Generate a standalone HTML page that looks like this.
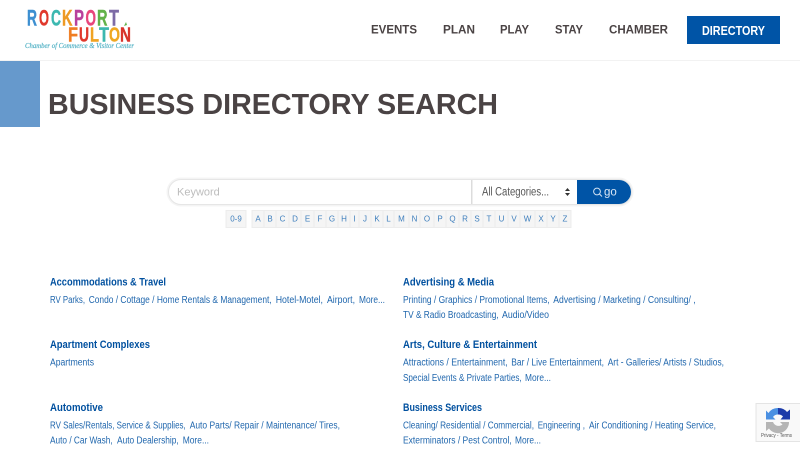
<!DOCTYPE html>
<html lang="en">
<head>
<meta charset="utf-8">
<title>Business Directory Search</title>
<style>
html,body{margin:0;padding:0;background:#fff;width:800px;height:450px;overflow:hidden}
svg{display:block;position:absolute;left:0;top:0}
text{font-family:"Liberation Sans",sans-serif}
.nav{font-size:11.5px;font-weight:700;fill:#4a4344}
.h{font-size:11px;font-weight:700;fill:#00509f}
.l{font-size:10px;fill:#1f66ad}
.a{font-size:8px;fill:#3f7fbd;text-anchor:middle}
.lg{font-family:"Liberation Sans",sans-serif;font-weight:700}
</style>
</head>
<body>
<svg width="800" height="450" viewBox="0 0 800 450" xmlns="http://www.w3.org/2000/svg">
<rect width="800" height="450" fill="#fff"/>
<!-- logo -->
<g class="lg" font-size="22" stroke-width=".4">
<text x="27" y="25.500" textLength="10" lengthAdjust="spacingAndGlyphs" fill="#3d8fd1" stroke="#3d8fd1">R</text>
<text x="39" y="25.500" textLength="10" lengthAdjust="spacingAndGlyphs" fill="#e0382c" stroke="#e0382c">O</text>
<text x="51" y="25.500" textLength="10" lengthAdjust="spacingAndGlyphs" fill="#3cb8b0" stroke="#3cb8b0">C</text>
<text x="62" y="25.500" textLength="10.500" lengthAdjust="spacingAndGlyphs" fill="#ee9a24" stroke="#ee9a24">K</text>
<text x="74" y="25.500" textLength="10" lengthAdjust="spacingAndGlyphs" fill="#b8409c" stroke="#b8409c">P</text>
<text x="85.500" y="25.500" textLength="10.500" lengthAdjust="spacingAndGlyphs" fill="#e8467c" stroke="#e8467c">O</text>
<text x="97" y="25.500" textLength="10.500" lengthAdjust="spacingAndGlyphs" fill="#62b24a" stroke="#62b24a">R</text>
<text x="109" y="25.500" textLength="10" lengthAdjust="spacingAndGlyphs" fill="#7d6ba6" stroke="#7d6ba6">T</text>
</g>
<g class="lg" font-size="20" stroke-width=".4">
<text x="68" y="41.500" textLength="10" lengthAdjust="spacingAndGlyphs" fill="#ef7d22" stroke="#ef7d22">F</text>
<text x="79" y="41.500" textLength="10" lengthAdjust="spacingAndGlyphs" fill="#e0382c" stroke="#e0382c">U</text>
<text x="90" y="41.500" textLength="9" lengthAdjust="spacingAndGlyphs" fill="#f0a322" stroke="#f0a322">L</text>
<text x="99" y="41.500" textLength="10" lengthAdjust="spacingAndGlyphs" fill="#3cb8b0" stroke="#3cb8b0">T</text>
<text x="109" y="41.500" textLength="11" lengthAdjust="spacingAndGlyphs" fill="#efa822" stroke="#efa822">O</text>
<text x="120" y="41.500" textLength="11" lengthAdjust="spacingAndGlyphs" fill="#d8322a" stroke="#d8322a">N</text>
</g>
<path d="M124 26l2-4 1 3z" fill="#62b24a"/>
<text x="25" y="48" textLength="109" lengthAdjust="spacingAndGlyphs" font-size="7" font-style="italic" fill="#4fb0c4" stroke="#4fb0c4" stroke-width=".15" style="font-family:'Liberation Serif',serif">Chamber of Commerce &amp; Visitor Center</text>

<!-- nav -->
<text class="nav" x="371" y="33.500" textLength="46" lengthAdjust="spacingAndGlyphs">EVENTS</text>
<text class="nav" x="443" y="33.500" textLength="32" lengthAdjust="spacingAndGlyphs">PLAN</text>
<text class="nav" x="500" y="33.500" textLength="29" lengthAdjust="spacingAndGlyphs">PLAY</text>
<text class="nav" x="555" y="33.500" textLength="28" lengthAdjust="spacingAndGlyphs">STAY</text>
<text class="nav" x="609" y="33.500" textLength="59" lengthAdjust="spacingAndGlyphs">CHAMBER</text>
<rect x="687" y="16" width="93" height="28" fill="#0054a6"/>
<text x="702" y="35" textLength="63" lengthAdjust="spacingAndGlyphs" font-size="13" font-weight="700" fill="#fff">DIRECTORY</text>
<rect x="0" y="60" width="800" height="1" fill="#f2f2f2"/>

<!-- title -->
<rect x="0" y="61" width="40" height="66" fill="#6699cc"/>
<text x="48" y="114" textLength="450" lengthAdjust="spacingAndGlyphs" font-size="29" font-weight="700" fill="#4a4344">BUSINESS DIRECTORY SEARCH</text>

<!-- search -->
<rect x="166.500" y="177.500" width="467" height="29" rx="14.500" fill="#f4f4f4"/>
<rect x="168.500" y="179.500" width="463" height="25" rx="12.500" fill="#fff" stroke="#e6e6e6"/>
<rect x="471" y="180" width="1.500" height="24" fill="#dcdcdc"/>
<path d="M577 180h42a12 12 0 0 1 0 24h-42z" fill="#0054a6"/>
<text x="177" y="195.500" font-size="11" fill="#bdbdbd">Keyword</text>
<text x="482" y="195.500" textLength="67" lengthAdjust="spacingAndGlyphs" font-size="11.500" fill="#555">All Categories...</text>
<path d="M565 191l2.500-3 2.500 3zM565 193l2.500 3 2.500-3z" fill="#333"/>
<circle cx="597" cy="191.500" r="3.400" fill="none" stroke="#cfe0f2" stroke-width="1"/>
<path d="M599.500 194l2.500 2.500" stroke="#cfe0f2" stroke-width="1.100" fill="none"/>
<text x="604" y="195.500" font-size="11.500" fill="#dce8f5">go</text>

<!-- alphabet -->
<g fill="#f5f5f5" stroke="#ececec" stroke-width="1">
<rect x="226" y="210.500" width="20" height="17"/>
<path d="M252 210.500H571V227.500H252Z"/>
<path fill="none" d="M264 211v16M276 211v16M289 211v16M301 211v16M314 211v16M326 211v16M338 211v16M350 211v16M359 211v16M371 211v16M383 211v16M394 211v16M409 211v16M420 211v16M434 211v16M446 211v16M459 211v16M471 211v16M483 211v16M495 211v16M508 211v16M520 211v16M535 211v16M547 211v16M559 211v16"/>
</g>
<text class="a" x="236" y="221.500">0-9</text>
<text class="a" x="258" y="221.500">A</text><text class="a" x="270" y="221.500">B</text><text class="a" x="282.500" y="221.500">C</text><text class="a" x="295" y="221.500">D</text><text class="a" x="307.500" y="221.500">E</text><text class="a" x="320" y="221.500">F</text><text class="a" x="332" y="221.500">G</text><text class="a" x="344" y="221.500">H</text><text class="a" x="354.500" y="221.500">I</text><text class="a" x="365" y="221.500">J</text><text class="a" x="377" y="221.500">K</text><text class="a" x="388.500" y="221.500">L</text><text class="a" x="401.500" y="221.500">M</text><text class="a" x="414.500" y="221.500">N</text><text class="a" x="427" y="221.500">O</text><text class="a" x="440" y="221.500">P</text><text class="a" x="452.500" y="221.500">Q</text><text class="a" x="465" y="221.500">R</text><text class="a" x="477" y="221.500">S</text><text class="a" x="489" y="221.500">T</text><text class="a" x="501.500" y="221.500">U</text><text class="a" x="514" y="221.500">V</text><text class="a" x="527.500" y="221.500">W</text><text class="a" x="541" y="221.500">X</text><text class="a" x="553" y="221.500">Y</text><text class="a" x="565" y="221.500">Z</text>

<!-- left column -->
<text class="h" x="50" y="285.500" textLength="116" lengthAdjust="spacingAndGlyphs">Accommodations &amp; Travel</text>
<text class="l" x="50" y="303" textLength="35" lengthAdjust="spacingAndGlyphs">RV Parks,</text>
<text class="l" x="88.700" y="303" textLength="183" lengthAdjust="spacingAndGlyphs">Condo / Cottage / Home Rentals &amp; Management,</text>
<text class="l" x="275.700" y="303" textLength="47.300" lengthAdjust="spacingAndGlyphs">Hotel-Motel,</text>
<text class="l" x="327" y="303" textLength="28" lengthAdjust="spacingAndGlyphs">Airport,</text>
<text class="l" x="359" y="303" textLength="26" lengthAdjust="spacingAndGlyphs">More...</text>
<text class="h" x="50" y="348" textLength="100" lengthAdjust="spacingAndGlyphs">Apartment Complexes</text>
<text class="l" x="50" y="365.500" textLength="44" lengthAdjust="spacingAndGlyphs">Apartments</text>
<text class="h" x="50" y="411" textLength="53" lengthAdjust="spacingAndGlyphs">Automotive</text>
<text class="l" x="50" y="428.500" textLength="135.700" lengthAdjust="spacingAndGlyphs">RV Sales/Rentals, Service &amp; Supplies,</text>
<text class="l" x="189.700" y="428.500" textLength="150.300" lengthAdjust="spacingAndGlyphs">Auto Parts/ Repair / Maintenance/ Tires,</text>
<text class="l" x="50" y="443.500" textLength="62.700" lengthAdjust="spacingAndGlyphs">Auto / Car Wash,</text>
<text class="l" x="117" y="443.500" textLength="61.700" lengthAdjust="spacingAndGlyphs">Auto Dealership,</text>
<text class="l" x="182.700" y="443.500" textLength="26.300" lengthAdjust="spacingAndGlyphs">More...</text>

<!-- right column -->
<text class="h" x="403" y="285.500" textLength="91" lengthAdjust="spacingAndGlyphs">Advertising &amp; Media</text>
<text class="l" x="403" y="303" textLength="146.700" lengthAdjust="spacingAndGlyphs">Printing / Graphics / Promotional Items,</text>
<text class="l" x="553.300" y="303" textLength="142.400" lengthAdjust="spacingAndGlyphs">Advertising / Marketing / Consulting/ ,</text>
<text class="l" x="403" y="318" textLength="95.700" lengthAdjust="spacingAndGlyphs">TV &amp; Radio Broadcasting,</text>
<text class="l" x="502" y="318" textLength="47" lengthAdjust="spacingAndGlyphs">Audio/Video</text>
<text class="h" x="403" y="348" textLength="134" lengthAdjust="spacingAndGlyphs">Arts, Culture &amp; Entertainment</text>
<text class="l" x="403" y="365.500" textLength="104.700" lengthAdjust="spacingAndGlyphs">Attractions / Entertainment,</text>
<text class="l" x="511.300" y="365.500" textLength="92.700" lengthAdjust="spacingAndGlyphs">Bar / Live Entertainment,</text>
<text class="l" x="607.700" y="365.500" textLength="116.300" lengthAdjust="spacingAndGlyphs">Art - Galleries/ Artists / Studios,</text>
<text class="l" x="403" y="381" textLength="118.700" lengthAdjust="spacingAndGlyphs">Special Events &amp; Private Parties,</text>
<text class="l" x="525" y="381" textLength="26" lengthAdjust="spacingAndGlyphs">More...</text>
<text class="h" x="403" y="411" textLength="79" lengthAdjust="spacingAndGlyphs">Business Services</text>
<text class="l" x="403" y="428.500" textLength="131" lengthAdjust="spacingAndGlyphs">Cleaning/ Residential / Commercial,</text>
<text class="l" x="537.700" y="428.500" textLength="47.300" lengthAdjust="spacingAndGlyphs">Engineering ,</text>
<text class="l" x="589" y="428.500" textLength="127" lengthAdjust="spacingAndGlyphs">Air Conditioning / Heating Service,</text>
<text class="l" x="403" y="443.500" textLength="108.700" lengthAdjust="spacingAndGlyphs">Exterminators / Pest Control,</text>
<text class="l" x="515" y="443.500" textLength="26" lengthAdjust="spacingAndGlyphs">More...</text>

<!-- recaptcha -->
<rect x="755.500" y="403" width="46" height="39" fill="#e4e4e4"/>
<rect x="756.500" y="404" width="45" height="37" fill="#f9f9f9"/>
<path d="M778 408v6.500a6 6 0 0 0-5 2.500l2.500 2.500h-9.500v-9l2.500 2.500a11 11 0 0 1 9.500-5z" fill="#4a90e2"/>
<path d="M778 408a11 11 0 0 1 9 4l3-2.500v10h-9.500l2.500-3a6 6 0 0 0-5-2z" fill="#1c3aa9"/>
<path d="M766 422h7a6 6 0 0 0 9.500 2.500l-2.500-2.500h9a11 11 0 0 1-20 6.500l-3 2.500z" fill="#b5b5b5"/>
<text x="761" y="437" textLength="31" lengthAdjust="spacingAndGlyphs" font-size="5" fill="#555">Privacy - Terms</text>
</svg>
</body>
</html>
